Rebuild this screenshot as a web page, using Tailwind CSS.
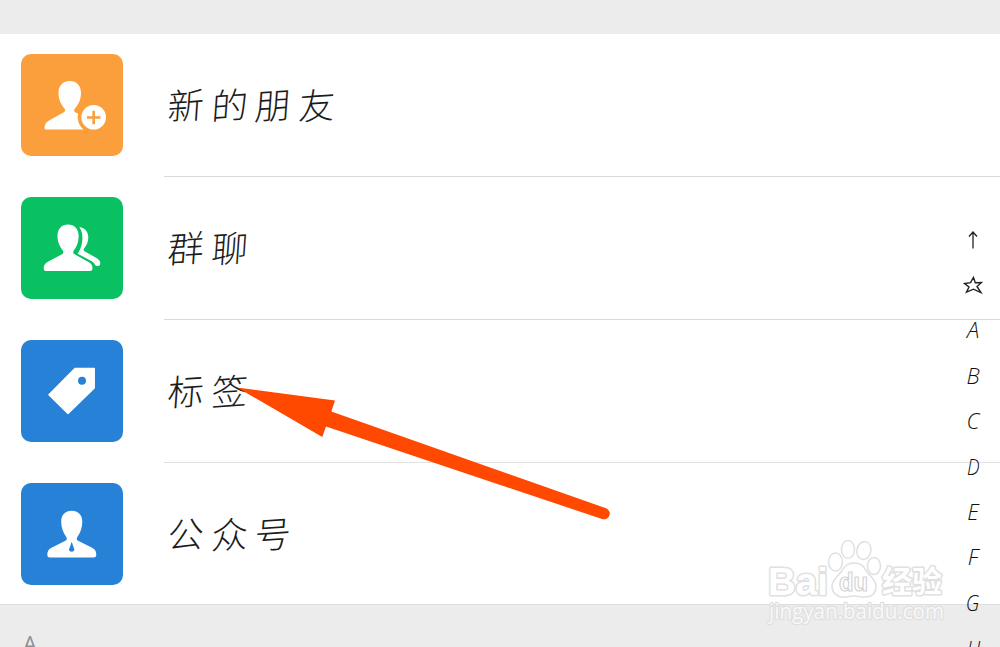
<!DOCTYPE html>
<html lang="zh-CN">
<head>
    <meta charset="UTF-8">
    <meta name="viewport" content="width=device-width, initial-scale=1.0">
    <title>通讯录</title>
    <script src="https://cdn.jsdelivr.net/npm/@tailwindcss/browser@4"></script>
</head>
<body class="bg-[#ececec] font-['Noto_Sans_CJK_SC',sans-serif]">
    <div class="relative h-[647px] w-full overflow-hidden pt-[34px]">
        <ul class="bg-white text-[36px] font-light leading-[1] text-[#1c1c1c]">
            <li class="flex h-[143px] pl-[21px]">
                <svg class="mt-5 h-[102px] w-[102px] shrink-0 rounded-[10px] bg-[#fb9f3c]" viewBox="0 0 102 102" fill="#fff">
                    <path d="M48.8 27C42 27 37.5 31.5 37.5 39c0 6.500 2.500 11.500 6 15.500 1.200 1.800.8 2.800-.7 3.700L28 66.500c-3 1.800-4.500 4-4.500 7.500 0 1 .6 1.500 1.500 1.500h37.500L66 63 54.500 58.500c-1.500-1-1.800-2.200-.6-4C57.500 50.500 60 45.500 60 39c0-7.500-4.500-12-11.200-12z"/>
                    <circle cx="72.700" cy="63.300" r="16" fill="#fb9f3c"/>
                    <circle cx="72.700" cy="63.300" r="12.300"/>
                    <path d="M66 63.500h13.500M72.700 56.800v13.500" stroke="#fb9f3c" stroke-width="2.600"/>
                </svg>
                <div class="ml-[41px] flex flex-1 items-center gap-[7.7px] border-b border-[#d9d9d9] pb-[4px] pl-[4px]">
                    <span class="-skew-4">新</span><span class="-skew-4">的</span><span class="-skew-4">朋</span><span class="-skew-4">友</span>
                </div>
            </li>
            <li class="flex h-[143px] pl-[21px]">
                <svg class="mt-5 h-[102px] w-[102px] shrink-0 rounded-[10px] bg-[#09c162]" viewBox="0 0 102 102" fill="#fff">
                    <path d="M47 27.500c-6.500 0-10.500 4.500-10.500 11.500 0 6 2.300 10.500 5 14 1.200 1.700 1.200 3.300-.6 4.300L26.500 65c-2.800 1.500-3.800 3.500-3.800 6.500 0 1.700.8 2.500 2.300 2.500h44c1.800 0 2.500-1 2.500-2.700 0-3-1.200-4.800-4-6.300l-13.900-7.700c-1.700-1-1.700-2.600-.5-4.300 2.700-3.500 4.600-8 4.600-14 0-7-4.200-11.500-10.700-11.500z"/>
                    <path d="M58.300 30.300c5.800.5 9 4.600 9 10.200 0 4.500-1.500 7.500-3.900 10.500-1.200 1.600-1 2.600.5 3.500l11.600 6.500c2.500 1.500 3.800 3 3.800 5.500 0 1.700-1 2.500-2.700 2.500-1.200 0-2.200-.4-2.800-1.500-.8-1.500-1.700-2.500-3.500-3.400l-13.700-7.400c2.500-3.700 4.800-9 4.800-16 0-4-.9-7.600-3.100-10.400z"/>
                </svg>
                <div class="ml-[41px] flex flex-1 items-center gap-[7.7px] border-b border-[#d9d9d9] pb-[4px] pl-[4px]">
                    <span class="-skew-4">群</span><span class="-skew-4">聊</span>
                </div>
            </li>
            <li class="flex h-[143px] pl-[21px]">
                <svg class="mt-5 h-[102px] w-[102px] shrink-0 rounded-[10px] bg-[#2782d7]" viewBox="0 0 102 102" fill="#fff">
                    <path d="M54 28.500h19.200V48L47 73.500 28 54.700z" stroke="#fff" stroke-width="1.500" stroke-linejoin="round"/>
                    <circle cx="61" cy="40.700" r="4" fill="#2782d7"/>
                </svg>
                <div class="ml-[41px] flex flex-1 items-center gap-[7.7px] border-b border-[#e2e2e2] pb-[4px] pl-[4px]">
                    <span class="-skew-4">标</span><span class="-skew-4">签</span>
                </div>
            </li>
            <li class="flex h-[141px] pl-[21px]">
                <svg class="mt-5 h-[102px] w-[102px] shrink-0 rounded-[10px] bg-[#2782d7]" viewBox="0 0 102 102" fill="#fff">
                    <path d="M50.700 27.700c-6.500 0-10.500 4-10.500 11 0 6 2 10.800 4.600 14.500 1.400 2 1.500 3.500-.4 4.600L31 64.500c-3.200 1.600-4.700 3.700-4.700 7 0 2 .8 3 2.500 3h44c1.700 0 2.500-1 2.500-3 0-3.300-1.500-5.400-4.700-7l-13.500-6.700c-1.900-1.100-1.700-2.600-.3-4.600 2.600-3.700 4.500-8.500 4.500-14.500 0-7-4.100-11-10.600-11z"/>
                    <path d="M50.700 58.700l2.600 7.600c.2 1.500-1 2.500-2.600 2.500s-2.800-1-2.600-2.500z" fill="#2782d7"/>
                </svg>
                <div class="ml-[41px] flex flex-1 items-center gap-[7.7px] pb-[4px] pl-[4px]">
                    <span class="-skew-4">公</span><span class="-skew-4">众</span><span class="-skew-4">号</span>
                </div>
            </li>
        </ul>
        <div class="h-[43px] border-t border-[#dedede] pl-[23px] pt-[25px] font-['Open_Sans',sans-serif] text-[22px] leading-[26px] text-[#909090]">A</div>

        <!-- watermark -->
        <svg class="absolute left-[760px] top-[532px]" width="200" height="100" viewBox="760 532 200 100" fill="#fff" stroke="#e0e0e0" stroke-width="1.500" stroke-linejoin="round">
            <g font-family="Liberation Sans, sans-serif" font-weight="bold" paint-order="stroke" stroke-width="3">
                <text x="768" y="595" font-size="39" textLength="60" lengthAdjust="spacingAndGlyphs">Bai</text>
                <text x="882" y="592" font-size="30" font-family="Noto Sans CJK SC, sans-serif" textLength="60" lengthAdjust="spacingAndGlyphs">经验</text>
            </g>
            <ellipse cx="835.500" cy="562" rx="7" ry="9"/>
            <ellipse cx="848" cy="549.500" rx="6.500" ry="9"/>
            <ellipse cx="864" cy="550.500" rx="7" ry="9" transform="rotate(10 864 550)"/>
            <ellipse cx="874" cy="566" rx="6.500" ry="8.500"/>
            <path d="M854 563c-8 0-10 5-13 9-4 5-9 8-9 14 0 7 5 11 11 11 5 0 7-1 11-1s6 1 11 1c7 0 11-4 11-11 0-6-5-9-9-14-3-5-5-9-13-9z"/>
            <text x="839" y="591" font-family="Liberation Sans, sans-serif" font-weight="bold" font-size="25" textLength="29" lengthAdjust="spacingAndGlyphs" stroke="#d4d4d4" stroke-width="1.200">du</text>
            <text x="769" y="619" font-family="Open Sans, sans-serif" font-size="21" textLength="175" lengthAdjust="spacingAndGlyphs" fill="#f8f8f8" paint-order="stroke" stroke-width="2.500">jingyan.baidu.com</text>
        </svg>

        <!-- index bar -->
        <div class="absolute left-[961px] top-[217px] grid w-6 auto-rows-[45.400px] place-items-center font-['Open_Sans',sans-serif] text-[22px] font-light italic leading-[1] text-[#111]">
            <svg width="14" height="20" fill="none" stroke="#222" stroke-width="1.300" viewBox="0 0 14 20"><path d="M7 18.500V2M3 6.500L7 2l4 4.500"/></svg>
            <svg width="20" height="20" fill="none" stroke="#222" stroke-width="1.400" viewBox="0 0 20 20"><path d="M10.500 2.500l1.800 5.200 6.200-.2-4.500 4 4 6.200-7.500-3.500-7 3L6 12 1.500 8.500l6-.8z"/></svg>
            <span class="-translate-y-px">A</span>
            <span class="-translate-y-px">B</span>
            <span class="-translate-y-px">C</span>
            <span class="-translate-y-px scale-x-[.85]">D</span>
            <span class="-translate-y-px">E</span>
            <span class="-translate-y-px">F</span>
            <span class="-translate-y-px scale-x-90">G</span>
            <span class="scale-x-90">H</span>
        </div>

        <!-- pointer -->
        <svg class="absolute left-0 top-0" width="1000" height="647" fill="#ff4800">
            <path d="M237 387.500L335 400.500 331.300 411.500 606 508.200A5.600 5.600 0 0 1 602 519L326 426.500 322.300 437z"/>
        </svg>
    </div>
</body>
</html>
